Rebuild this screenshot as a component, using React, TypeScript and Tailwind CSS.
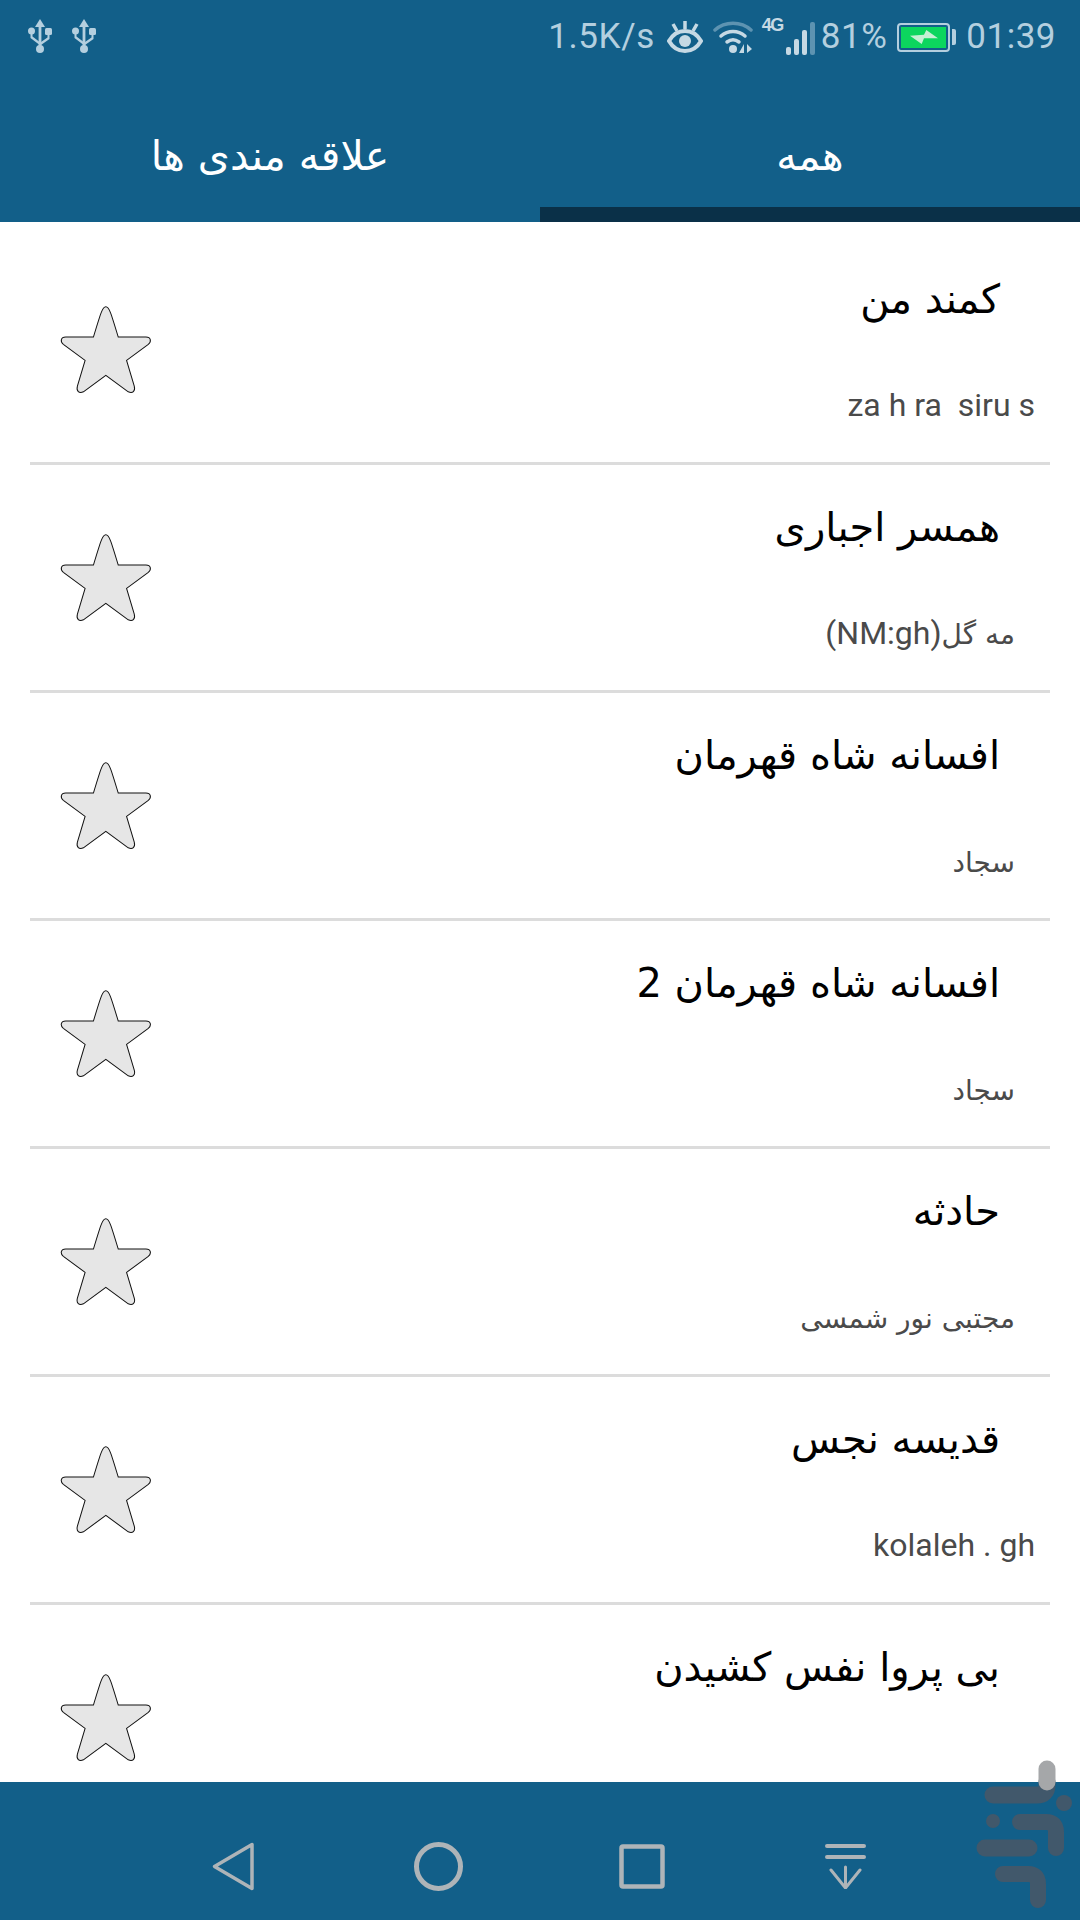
const stories = [
  { title: 'کمند من', en: 'za h ra  siru s' },
  { title: 'همسر اجباری', fa: 'مه گل', en: '(NM:gh)' },
  { title: 'افسانه شاه قهرمان', fa: 'سجاد' },
  { title: 'افسانه شاه قهرمان 2', fa: 'سجاد' },
  { title: 'حادثه', fa: 'مجتبی نور شمسی' },
  { title: 'قدیسه نجس', en: 'kolaleh . gh' },
  { title: 'بی پروا نفس کشیدن' },
];

function UsbIcon() {
  return (
    <svg width="24" height="36" viewBox="0 0 24 36" fill="#b4cfdf">
      <path d="M12 0l5 8h-3.600v19h-2.800V8H7z" />
      <circle cx="12" cy="30" r="4" />
      <circle cx="3.500" cy="12" r="3.500" />
      <rect x="17" y="9" width="7" height="7" rx="1.500" />
      <path d="M2.500 14h2v3.500l6.500 5v3l-8.500-6.500zM19.500 15h2v5L13 26v-3l6.500-4.500z" />
    </svg>
  );
}

function StatusBar() {
  return (
    <div className="flex h-[72px] items-center justify-between pl-[28px] pr-[24px] pt-[2px] text-[#b4cfdf]">
      <div className="flex gap-[20px]">
        <UsbIcon />
        <UsbIcon />
      </div>
      <div className="flex items-center font-['Roboto',sans-serif] text-[35px]">
        <span className="tracking-[0.6px]">1.5K/s</span>
        <svg className="ml-[12px]" width="36" height="34" viewBox="0 0 36 34" fill="none" stroke="#c6d9e4" strokeWidth="4">
          <path d="M2 21c4-7 9-10 16-10s12 3 16 10c-4 7-9 10-16 10S6 28 2 21z" />
          <circle cx="18" cy="21" r="6" fill="#c6d9e4" stroke="none" />
          <path d="M18 1v8M6 4l4 7M30 4l-4 7" strokeWidth="3.500" />
        </svg>
        <svg className="ml-[10px]" width="40" height="36" viewBox="0 0 40 36" fill="none" strokeLinecap="round">
          <path d="M2 11c10-9 26-9 36 0" stroke="#5d93b1" strokeWidth="3.500" />
          <path d="M8 17c7-6 17-6 24 0M14 23c4-3 8-3 12 0" stroke="#c6d9e4" strokeWidth="3.500" />
          <circle cx="20" cy="30" r="4" fill="#c6d9e4" />
          <path d="M31 25v9h-5zM34 25l5 5-5 4z" fill="#c6d9e4" />
        </svg>
        <div className="relative ml-[10px] h-[36px] w-[52px]">
          <span className="absolute left-[-1px] top-[-4px] font-['Liberation_Sans',sans-serif] text-[18px] font-bold leading-[20px] tracking-[-1.5px] text-[#c6d9e4]">
            4G
          </span>
          <div className="absolute bottom-0 right-0 flex items-end gap-[3px]">
            <div className="h-[8px] w-[5px] rounded-[2px] bg-[#c6d9e4]" />
            <div className="h-[16px] w-[5px] rounded-[2px] bg-[#c6d9e4]" />
            <div className="h-[25px] w-[5px] rounded-[2px] bg-[#c6d9e4]" />
            <div className="h-[33px] w-[5px] rounded-[2px] bg-[#5d93b1]" />
          </div>
        </div>
        <span className="ml-[6px] tracking-[0.5px]">81%</span>
        <div className="ml-[10px] flex items-center">
          <div className="flex h-[29px] w-[53px] items-center justify-center rounded-[4px] border-2 border-[#b4cfdf] p-[2px]">
            <div className="flex h-full w-full items-center justify-center bg-[#0cd65e]">
              <svg width="30" height="14" viewBox="0 0 24 12" fill="#c5f0d4">
                <path d="M0 5l12-1 2-4 10 7-12 0-2 5z" />
              </svg>
            </div>
          </div>
          <div className="ml-[2px] h-[16px] w-[4px] rounded-r-[2px] bg-[#b4cfdf]" />
        </div>
        <span className="ml-[10px] tracking-[0.5px]">01:39</span>
      </div>
    </div>
  );
}

function Tabs() {
  return (
    <div className="flex h-[150px] text-[41px] text-white">
      <div className="flex flex-1 items-center justify-center pt-[20px]">علاقه مندی ها</div>
      <div className="flex flex-1 items-center justify-center border-b-[15px] border-[#0a3048] pt-[35px]">همه</div>
    </div>
  );
}

function StarIcon() {
  return (
    <svg width="93" height="90" viewBox="115 73 278 268" fill="#e6e6e6" stroke="#111111" strokeWidth="3">
      <path d="M255 78C265 78 270 95 292 168L375 168C390 168 392 182 382 190L317 238L340 315C344 330 335 338 322 332L255 283L188 332C175 338 166 330 170 315L193 238L128 190C118 182 120 168 135 168L218 168C240 95 245 78 255 78Z" />
    </svg>
  );
}

function StoryRow({ title, fa, en }: { title: string; fa?: string; en?: string }) {
  return (
    <div className="mx-[30px] flex h-[228px] shrink-0 border-b-[3px] border-[#dcdcdc]">
      <div className="flex w-[150px] items-center justify-center">
        <StarIcon />
      </div>
      <div className="flex flex-1 flex-col items-end pt-[36px]">
        <div className="pr-[50px] text-[40px] leading-[52px] text-black" dir="rtl">
          {title}
        </div>
        {(fa || en) && (
          <div
            dir="rtl"
            className={`mt-[62px] whitespace-pre font-['Roboto','DejaVu_Sans',sans-serif] text-[32px] leading-[36px] text-[#4a4a4a] ${fa ? 'pr-[35px]' : 'pr-[15px]'}`}
          >
            {fa && <span className="font-['DejaVu_Sans',sans-serif] text-[28px]">{fa}</span>}
            {en}
          </div>
        )}
      </div>
    </div>
  );
}

function NavBar() {
  return (
    <div className="relative flex h-[138px] shrink-0 items-center bg-[#125f89] pl-[212px] pt-[30px]">
      <svg width="43" height="49" viewBox="0 0 43 49" fill="none" stroke="#aeb4b8" strokeWidth="3.500" strokeLinejoin="round">
        <path d="M40 2.500v44L2.500 24.500z" />
      </svg>
      <svg className="ml-[159px]" width="49" height="49" viewBox="0 0 49 49" fill="none" stroke="#aeb4b8" strokeWidth="5">
        <circle cx="24.500" cy="24.500" r="22" />
      </svg>
      <svg className="ml-[156px]" width="46" height="45" viewBox="0 0 46 45" fill="none" stroke="#aeb4b8" strokeWidth="4.500" strokeLinejoin="round">
        <rect x="2.500" y="2.500" width="41" height="40" rx="1.500" />
      </svg>
      <svg className="ml-[160px]" width="41" height="45" viewBox="0 0 41 45" fill="none" stroke="#aeb4b8" strokeLinecap="round">
        <path d="M2 2h37M2 13h37" strokeWidth="4" />
        <path d="M20.500 23v21M6 26l14.500 18L35 26" strokeWidth="3" />
      </svg>
      {/* store watermark, sticks out above the bar */}
      <svg className="absolute bottom-0 right-0" width="120" height="180" viewBox="0 0 120 180" fill="none" strokeLinecap="round">
        <g stroke="#41586b" strokeWidth="17">
          <path d="M87 42v3q0 10-10 10H33" />
          <path d="M60 82H86q10 0 10 10V108" strokeWidth="16" />
          <path d="M25 108H69" />
          <path d="M43 134H68q10 0 10 10V160" strokeWidth="16" />
        </g>
        <circle cx="104" cy="63" r="8" fill="#41586b" />
        <circle cx="33" cy="81" r="7" fill="#41586b" />
        <path d="M87 29V42" stroke="#a5a7a9" strokeWidth="17" />
      </svg>
    </div>
  );
}

export default function App() {
  return (
    <div className="flex h-[1920px] w-[1080px] flex-col overflow-hidden bg-white font-['DejaVu_Sans',sans-serif]">
      <div className="shrink-0 bg-[#125f89]">
        <StatusBar />
        <Tabs />
      </div>
      <div className="flex flex-1 flex-col overflow-hidden pt-[15px]">
        {stories.map((s) => (
          <StoryRow key={s.title} title={s.title} fa={s.fa} en={s.en} />
        ))}
      </div>
      <NavBar />
    </div>
  );
}
